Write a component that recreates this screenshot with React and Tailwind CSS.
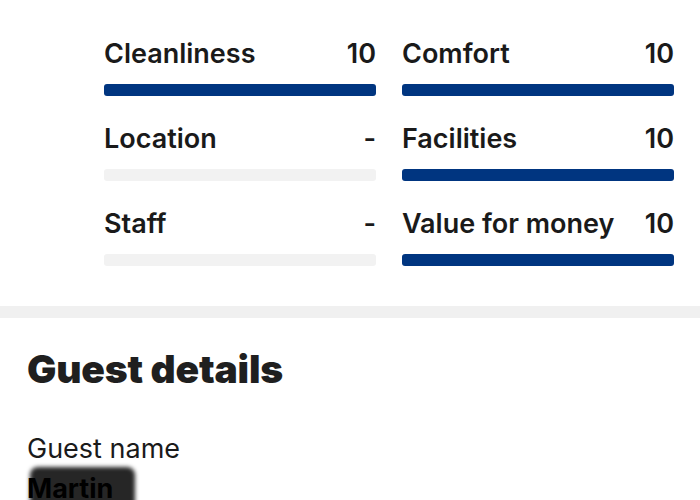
import React from 'react';

const scores = [
  { label: 'Cleanliness', value: '10' },
  { label: 'Comfort', value: '10' },
  { label: 'Location', value: '-' },
  { label: 'Facilities', value: '10' },
  { label: 'Staff', value: '-' },
  { label: 'Value for money', value: '10' },
];

const ScoreBar = ({ label, value }) => {
  const filled = value !== '-';
  return (
    <div>
      <div className="flex items-center justify-between text-[27px] leading-[32px] font-semibold text-[#1a1a1a]">
        <span>{label}</span>
        <span>{value}</span>
      </div>
      <div
        className={`mt-[14px] h-[12px] rounded-[3px] ${filled ? 'bg-[#003580]' : 'bg-[#f2f2f2]'}`}
      />
    </div>
  );
};

export default function App() {
  return (
    <div className="w-[700px] h-[500px] overflow-hidden bg-white font-['Inter',_'Noto_Sans',_sans-serif]">
      {/* Review scores */}
      <div className="pl-[104px] pr-[26px] pt-[38px] pb-[40px]">
        <div className="grid grid-cols-2 gap-x-[26px] gap-y-[27px]">
          {scores.map((s) => (
            <ScoreBar key={s.label} label={s.label} value={s.value} />
          ))}
        </div>
      </div>

      <div className="h-[12px] bg-[#f0f0f0]" />

      {/* Guest details */}
      <div className="px-[27px] pt-[27px]">
        <h2 className="text-[39px] leading-[48px] font-black tracking-[-0.2px] text-[#1f1f1f]">
          Guest details
        </h2>
        <div className="mt-[40px] text-[27px] leading-[32px] text-[#1a1a1a]">Guest name</div>
        <div className="relative mt-[8px] inline-block">
          {/* redacted name */}
          <div className="absolute left-[3px] -top-[6px] w-[105px] h-[50px] rounded-[8px] bg-[#262626] blur-[2px]" />
          <span className="relative text-[27px] leading-[32px] font-bold text-black">Martin</span>
        </div>
      </div>
    </div>
  );
}
